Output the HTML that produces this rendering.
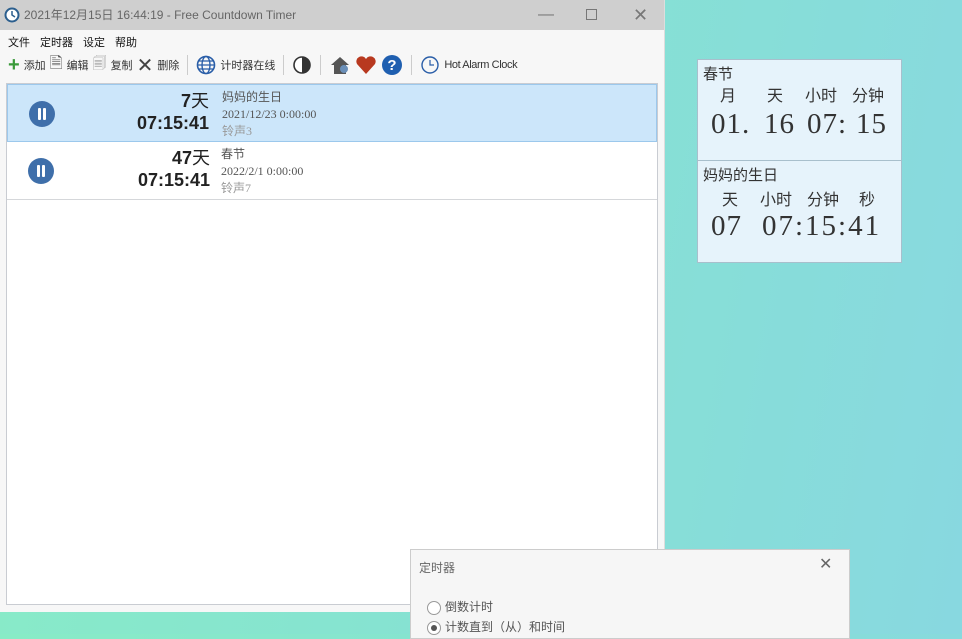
<!DOCTYPE html>
<html><head><meta charset="utf-8"><style>
*{margin:0;padding:0;box-sizing:border-box}
body{width:962px;height:634px;overflow:hidden;position:relative;font-family:"Liberation Sans","Noto Sans CJK SC",sans-serif;background:linear-gradient(100deg,#88ecc6 0%,#86e2d2 50%,#88d8e0 100%)}
.win{position:absolute;left:0;top:0;width:665px;height:612px;background:#f7f7f7;border-right:1px solid #ddd}
.title{height:30px;background:#cfcfcf;color:#666;font-size:12px;line-height:30px;padding-left:24px;position:relative}
.menu{position:absolute;top:34px;left:8px;font-size:11px;color:#111;word-spacing:6px}
.menu span{margin-right:10px}
.tb{position:absolute;top:52px;left:8px;height:26px;font-size:11px;color:#333;display:flex;align-items:center;gap:4px;white-space:nowrap}
.sep{width:1px;height:20px;background:#ccc;margin:0 4px}
.list{position:absolute;left:6px;top:83px;width:652px;height:522px;background:#fff;border:1px solid #c9ccd2}
.row{height:58px;border-bottom:1px solid #d5d7da;position:relative}
.row.sel{background:#cce6fa;border:1px solid #9cc8ec}
.pb{position:absolute;left:21px;top:16px;width:26px;height:26px;border-radius:50%;background:#3f6faa}
.pb:before,.pb:after{content:"";position:absolute;top:7px;width:3px;height:12px;background:#fff;border-radius:1px}
.pb:before{left:9px}.pb:after{left:14px}
.big{position:absolute;right:447px;text-align:right;font-weight:bold;font-size:18px;color:#222;line-height:22px}
.info{position:absolute;left:214px;top:4px;font-size:12px;color:#555;line-height:17px;font-family:"Liberation Serif","Noto Sans CJK SC",serif}
.info .g{color:#999}
.wid{position:absolute;left:697px;width:205px;background:#e6f3fb;border:1px solid #a8bfcc;font-family:"Liberation Serif","Noto Serif CJK SC",serif;color:#333}
.wid .n{font-size:15px;padding:3px 0 0 5px;font-family:"Liberation Sans","Noto Sans CJK SC",sans-serif}
.lab{position:absolute;font-size:16px;line-height:16px;font-family:"Liberation Sans","Noto Sans CJK SC",sans-serif}
.num{position:absolute;font-size:29px;line-height:29px;letter-spacing:1px;white-space:nowrap}
.dlg{position:absolute;left:410px;top:549px;width:440px;height:90px;background:#f6f6f6;border:1px solid #ccc;font-size:12px;color:#555}
.radio{display:inline-block;width:14px;height:14px;border:1px solid #999;border-radius:50%;background:#fff;vertical-align:middle;margin-right:4px;position:relative}
</style></head><body>
<div class="win">
 <div class="title"><svg style="position:absolute;left:4px;top:7px" width="16" height="16"><circle cx="8" cy="8" r="6.5" fill="#fff" stroke="#2c5f8e" stroke-width="2"/><path d="M8 4v4l3 2" stroke="#2c5f8e" stroke-width="1.5" fill="none"/></svg>2021年12月15日 16:44:19 - Free Countdown Timer
  <span style="position:absolute;left:538px;top:0;font-size:16px;color:#777">—</span>
  <span style="position:absolute;left:586px;top:9px;width:11px;height:11px;border:1px solid #777"></span>
  <span style="position:absolute;left:633px;top:0;font-size:18px;color:#777">✕</span>
 </div>
 <div class="menu"><span>文件</span><span>定时器</span><span>设定</span><span>帮助</span></div>
 <div class="tb">
  <span style="color:#3a9a3a;font-size:20px;font-weight:bold">+</span>添加
  <span style="font-size:16px;color:#555">🗎</span>编辑
  <span style="font-size:14px;color:#999">🗐</span>复制
  <span style="font-size:20px;color:#444">✕</span>删除
  <span class="sep"></span>
  <svg width="20" height="20"><circle cx="10" cy="10" r="8.5" fill="none" stroke="#2a5ea8" stroke-width="1.6"/><ellipse cx="10" cy="10" rx="4" ry="8.5" fill="none" stroke="#2a5ea8" stroke-width="1.4"/><path d="M2 10h16M3 6h14M3 14h14" stroke="#2a5ea8" stroke-width="1.2"/></svg>计时器在线
  <span class="sep"></span>
  <svg width="20" height="20"><circle cx="10" cy="10" r="8" fill="#fff" stroke="#333" stroke-width="1.6"/><path d="M10 2a8 8 0 0 1 0 16z" fill="#333"/></svg>
  <span class="sep"></span>
  <svg width="22" height="22"><path d="M2 11 11 3l9 8h-3v9H5v-9z" fill="#555"/><circle cx="15" cy="15" r="4" fill="#6a8fb8"/></svg>
  <svg width="22" height="20"><path d="M11 19 2 9a5 5 0 0 1 9-5 5 5 0 0 1 9 5z" fill="#b8391f"/></svg>
  <svg width="22" height="22"><circle cx="11" cy="11" r="10" fill="#1f5fb0"/><text x="11" y="16" text-anchor="middle" fill="#fff" font-size="15" font-weight="bold" font-family="Liberation Sans">?</text></svg>
  <span class="sep"></span>
  <svg width="20" height="20"><circle cx="10" cy="10" r="8" fill="none" stroke="#2a5ea8" stroke-width="1.4"/><path d="M10 5v5h4" stroke="#2a5ea8" stroke-width="1.2" fill="none"/></svg><span style="letter-spacing:-0.4px">Hot Alarm Clock</span>
 </div>
 <div class="list">
  <div class="row sel"><div class="pb"></div>
   <div class="big" style="top:5px">7<span style="font-weight:normal">天</span><br>07:15:41</div>
   <div class="info">妈妈的生日<br>2021/12/23 0:00:00<br><span class="g">铃声3</span></div></div>
  <div class="row"><div class="pb"></div>
   <div class="big" style="top:5px">47<span style="font-weight:normal">天</span><br>07:15:41</div>
   <div class="info">春节<br>2022/2/1 0:00:00<br><span class="g">铃声7</span></div></div>
 </div>
</div>
<div class="wid" style="top:59px;height:102px">
 <div class="n">春节</div>
 <span class="lab" style="left:22px;top:29px">月</span><span class="lab" style="left:69px;top:29px">天</span><span class="lab" style="left:107px;top:29px">小时</span><span class="lab" style="left:154px;top:29px">分钟</span>
 <span class="num" style="left:13px;top:50px">01.</span><span class="num" style="left:66px;top:50px">16</span><span class="num" style="left:109px;top:50px">07:</span><span class="num" style="left:158px;top:50px">15</span>
</div>
<div class="wid" style="top:160px;height:103px">
 <div class="n">妈妈的生日</div>
 <span class="lab" style="left:24px;top:32px">天</span><span class="lab" style="left:62px;top:32px">小时</span><span class="lab" style="left:109px;top:32px">分钟</span><span class="lab" style="left:161px;top:32px">秒</span>
 <span class="num" style="left:13px;top:51px">07</span><span class="num" style="left:64px;top:51px;letter-spacing:2px">07:15:41</span>
</div>
<div class="dlg">
 <div style="position:absolute;left:8px;top:9px;color:#666">定时器</div>
 <div style="position:absolute;left:408px;top:4px;font-size:16px;color:#666">✕</div>
 <div style="position:absolute;left:16px;top:48px"><span class="radio"></span>倒数计时</div>
 <div style="position:absolute;left:16px;top:68px"><span class="radio"><span style="position:absolute;left:3px;top:3px;width:6px;height:6px;border-radius:50%;background:#555"></span></span>计数直到（从）和时间</div>
</div>
</body></html>
